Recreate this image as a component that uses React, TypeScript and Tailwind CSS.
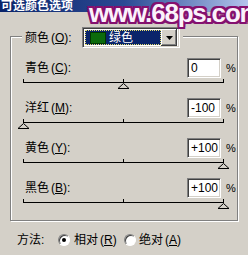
import React from "react";

const font = "font-['Liberation_Sans','Noto_Sans_CJK_SC',sans-serif]";

function Sunken({ className, children }: { className: string; children?: React.ReactNode }) {
  return (
    <div
      className={`border border-t-[#808080] border-l-[#808080] border-b-white border-r-white shadow-[inset_1px_1px_0_#404040,inset_-1px_-1px_0_#d4d0c8] ${className}`}
    >
      {children}
    </div>
  );
}

function Slider({ at }: { at: number }) {
  const x = 6 + at;
  return (
    <svg width="213" height="20" className="-ml-[6px] block">
      <line x1="6" y1="4.5" x2="207" y2="4.5" stroke="#000" />
      <line x1="6.5" y1="1" x2="6.5" y2="5" stroke="#000" />
      <line x1="106.5" y1="1" x2="106.5" y2="5" stroke="#000" />
      <line x1="206.5" y1="1" x2="206.5" y2="5" stroke="#000" />
      <polygon
        points={`${x + 0.5},5.5 ${x + 6},10.5 ${x - 5},10.5`}
        fill="#d4d0c8"
        stroke="#000"
      />
    </svg>
  );
}

function Row({ name, k, value, at }: { name: string; k: string; value: string; at: number }) {
  return (
    <div>
      <div className="flex h-[20px] items-center">
        <span className="ml-[2px] w-[162px] text-[12px] leading-[12px]">
          {name}<span className="ml-[2px]">(<u>{k}</u>):</span>
        </span>
        <Sunken className="h-[20px] w-[34px] bg-white pl-[3px] text-[12px] leading-[18px]">{value}</Sunken>
        <span className="ml-[5px] text-[11px] leading-[12px]">%</span>
      </div>
      <Slider at={at} />
    </div>
  );
}

function Radio({ checked }: { checked?: boolean }) {
  return (
    <span className="flex h-[12px] w-[12px] items-center justify-center rounded-full border border-t-[#808080] border-l-[#808080] border-b-white border-r-white bg-white shadow-[inset_1px_1px_0_#404040]">
      {checked && <span className="h-[4px] w-[4px] rounded-full bg-black" />}
    </span>
  );
}

export default function App() {
  return (
    <div className={`relative flex h-[255px] w-[248px] flex-col overflow-hidden bg-[#d4d0c8] text-black ${font}`}>
      <div className="h-[12px] bg-linear-to-r from-[#0a246a] via-[#2c4a94] to-[#b4c4ec] pl-[1px] text-[12px] font-bold leading-[12px] text-white">
        可选颜色选项
      </div>

      <div className="ml-[10px] mt-[24px] h-[185px] w-[228px] border border-[#808080] shadow-[1px_1px_0_#fff,inset_1px_1px_0_#fff]">
        <div className="-mt-[10px] ml-[11px] flex h-[21px] w-fit items-center bg-[#d4d0c8] pl-[3px] pr-[3px]">
          <span className="w-[57px] text-[12px] leading-[12px]">
            颜色<span className="ml-[2px]">(<u>O</u>):</span>
          </span>
          <Sunken className="flex h-[21px] w-[98px] items-center bg-white p-[2px]">
            <div className="flex h-full flex-1 items-center bg-[#0a246a] outline-1 -outline-offset-1 outline-dotted outline-[#e8e070]">
              <span className="ml-[5px] h-[12px] w-[16px] border border-[#003800] bg-[#0c6b0c]" />
              <span className="ml-[3px] text-[12px] leading-[12px] text-white">绿色</span>
            </div>
            <div className="flex h-[17px] w-[16px] items-center justify-center bg-[#d4d0c8] shadow-[inset_-1px_-1px_0_#404040,inset_1px_1px_0_#fff,inset_-2px_-2px_0_#808080]">
              <svg width="7" height="4">
                <polygon points="0,0 7,0 3.5,4" fill="#000" />
              </svg>
            </div>
          </Sunken>
        </div>

        <div className="mt-[10px] pl-[12px]">
          <Row name="青色" k="C" value="0" at={100} />
          <Row name="洋红" k="M" value="-100" at={0} />
          <Row name="黄色" k="Y" value="+100" at={200} />
          <Row name="黑色" k="B" value="+100" at={200} />
        </div>
      </div>

      <div className="mt-[12px] flex h-[14px] items-center pl-[17px] text-[12px] leading-[12px]">
        <span className="w-[41px]">方法:</span>
        <Radio checked />
        <span className="ml-[4px] w-[50px]">
          相对<span className="ml-[2px]">(<u>R</u>)</span>
        </span>
        <Radio />
        <span className="ml-[3px]">
          绝对<span className="ml-[2px]">(<u>A</u>)</span>
        </span>
      </div>

      <div className="absolute left-[89px] top-0 font-['Liberation_Sans',sans-serif] text-[26px] font-bold leading-[26px] tracking-[-1.2px] text-[#fbf2fb] [text-shadow:2px_0_0_#84106f,-2px_0_0_#84106f,0_2px_0_#84106f,0_-2px_0_#84106f,2px_2px_0_#84106f,-2px_-2px_0_#84106f,2px_-2px_0_#84106f,-2px_2px_0_#84106f,1px_0_0_#84106f,0_1px_0_#84106f]">
        www.68ps.com
      </div>
    </div>
  );
}
